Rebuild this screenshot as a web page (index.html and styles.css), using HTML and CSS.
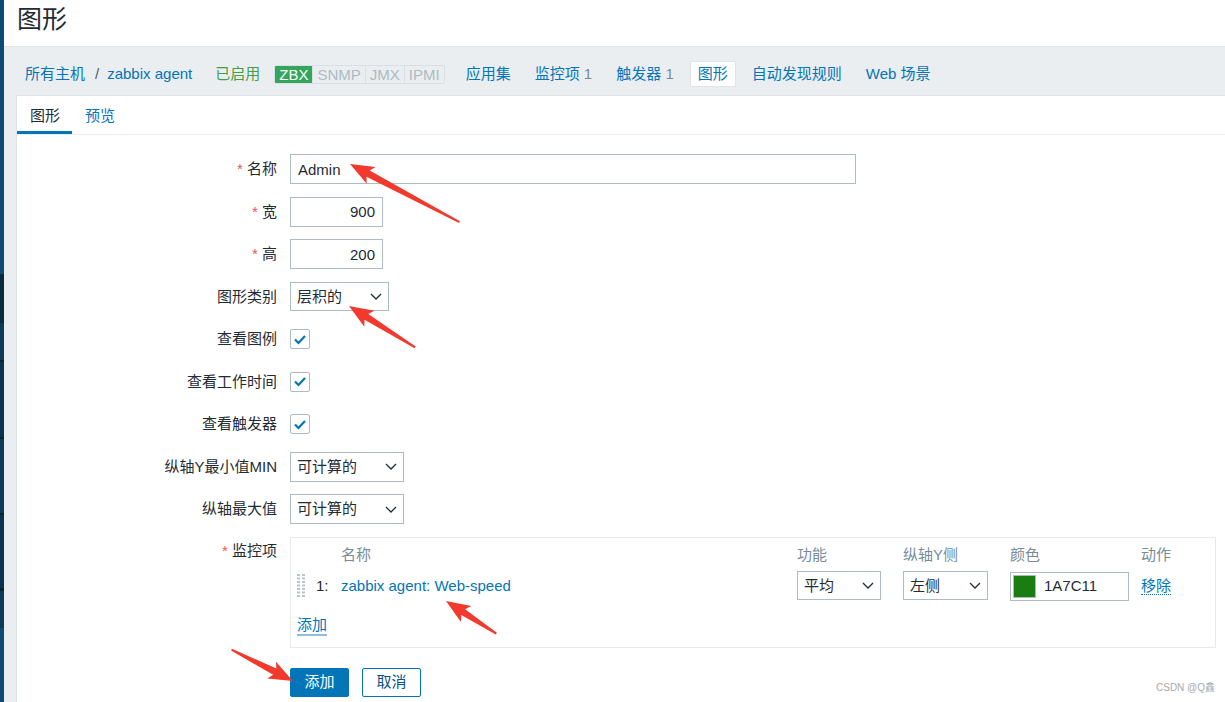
FILE: index.html
```html
<!DOCTYPE html>
<html lang="zh">
<head>
<meta charset="utf-8">
<title>图形</title>
<link rel="stylesheet" href="styles.css">
</head>
<body>
<div class="sidebar"></div>
<div class="main">
  <header class="header"><h1 class="title">图形</h1></header>
  <div class="body-area">
    <nav class="nav">
      <a class="link">所有主机</a>
      <span class="sep">/</span>
      <a class="link">zabbix agent</a>
      <span class="enabled">已启用</span>
      <span class="tags"><span class="tag on">ZBX</span><span class="tag">SNMP</span><span class="tag">JMX</span><span class="tag">IPMI</span></span>
      <ul class="nav-items">
        <li class="nav-item"><a class="link">应用集</a></li>
        <li class="nav-item"><a class="link">监控项</a> <span class="count">1</span></li>
        <li class="nav-item"><a class="link">触发器</a> <span class="count">1</span></li>
        <li class="nav-item selected"><a class="link">图形</a></li>
        <li class="nav-item"><a class="link">自动发现规则</a></li>
        <li class="nav-item"><a class="link">Web 场景</a></li>
      </ul>
    </nav>
    <section class="panel">
      <div class="tabs">
        <div class="tab active">图形</div>
        <div class="tab"><a class="link">预览</a></div>
      </div>
      <form class="form">
        <div class="row">
          <label class="lbl"><span class="req">*</span> 名称</label>
          <div class="field"><input class="text w-name" value="Admin" readonly></div>
        </div>
        <div class="row">
          <label class="lbl"><span class="req">*</span> 宽</label>
          <div class="field"><input class="text num w-num" value="900" readonly></div>
        </div>
        <div class="row">
          <label class="lbl"><span class="req">*</span> 高</label>
          <div class="field"><input class="text num w-num" value="200" readonly></div>
        </div>
        <div class="row">
          <label class="lbl">图形类别</label>
          <div class="field"><div class="select w-type"><span>层积的</span><svg class="chev" width="12" height="7" viewBox="0 0 12 7"><path d="M1 1l5 5 5-5" fill="none" stroke="#1f2c33" stroke-width="1.3"/></svg></div></div>
        </div>
        <div class="row">
          <label class="lbl">查看图例</label>
          <div class="field"><div class="cb"><svg width="14" height="11" viewBox="0 0 14 11"><path d="M2 5.5l3.5 3.5L12 2" fill="none" stroke="#0275b8" stroke-width="2.2"/></svg></div></div>
        </div>
        <div class="row">
          <label class="lbl">查看工作时间</label>
          <div class="field"><div class="cb"><svg width="14" height="11" viewBox="0 0 14 11"><path d="M2 5.5l3.5 3.5L12 2" fill="none" stroke="#0275b8" stroke-width="2.2"/></svg></div></div>
        </div>
        <div class="row">
          <label class="lbl">查看触发器</label>
          <div class="field"><div class="cb"><svg width="14" height="11" viewBox="0 0 14 11"><path d="M2 5.5l3.5 3.5L12 2" fill="none" stroke="#0275b8" stroke-width="2.2"/></svg></div></div>
        </div>
        <div class="row">
          <label class="lbl">纵轴Y最小值MIN</label>
          <div class="field"><div class="select w-calc"><span>可计算的</span><svg class="chev" width="12" height="7" viewBox="0 0 12 7"><path d="M1 1l5 5 5-5" fill="none" stroke="#1f2c33" stroke-width="1.3"/></svg></div></div>
        </div>
        <div class="row">
          <label class="lbl">纵轴最大值</label>
          <div class="field"><div class="select w-calc"><span>可计算的</span><svg class="chev" width="12" height="7" viewBox="0 0 12 7"><path d="M1 1l5 5 5-5" fill="none" stroke="#1f2c33" stroke-width="1.3"/></svg></div></div>
        </div>
        <div class="row top">
          <label class="lbl lbl-top"><span class="req">*</span> 监控项</label>
          <div class="field">
            <div class="items">
              <div class="items-grid head">
                <span></span><span></span>
                <span>名称</span><span>功能</span><span>纵轴Y侧</span><span>颜色</span><span>动作</span>
              </div>
              <div class="items-grid item-row">
                <span class="drag"><svg width="8" height="23" viewBox="0 0 8 23"><g fill="#b9c4cb"><rect x="0" y="0" width="3" height="2"/><rect x="5" y="0" width="3" height="2"/><rect x="0" y="3.5" width="3" height="2"/><rect x="5" y="3.5" width="3" height="2"/><rect x="0" y="7" width="3" height="2"/><rect x="5" y="7" width="3" height="2"/><rect x="0" y="10.5" width="3" height="2"/><rect x="5" y="10.5" width="3" height="2"/><rect x="0" y="14" width="3" height="2"/><rect x="5" y="14" width="3" height="2"/><rect x="0" y="17.5" width="3" height="2"/><rect x="5" y="17.5" width="3" height="2"/><rect x="0" y="21" width="3" height="2"/><rect x="5" y="21" width="3" height="2"/></g></svg></span>
                <span class="idx">1:</span>
                <span><a class="link">zabbix agent: Web-speed</a></span>
                <span><div class="select w-func"><span>平均</span><svg class="chev" width="12" height="7" viewBox="0 0 12 7"><path d="M1 1l5 5 5-5" fill="none" stroke="#1f2c33" stroke-width="1.3"/></svg></div></span>
                <span><div class="select w-axis"><span>左侧</span><svg class="chev" width="12" height="7" viewBox="0 0 12 7"><path d="M1 1l5 5 5-5" fill="none" stroke="#1f2c33" stroke-width="1.3"/></svg></div></span>
                <span><div class="color-input"><span class="swatch"></span><span>1A7C11</span></div></span>
                <span><a class="link action">移除</a></span>
              </div>
              <div class="add-row"><a class="link add">添加</a></div>
            </div>
          </div>
        </div>
        <div class="row buttons">
          <span></span>
          <div class="field btns">
            <button type="button" class="btn primary">添加</button>
            <button type="button" class="btn alt">取消</button>
          </div>
        </div>
      </form>
    </section>
  </div>
</div>
<div class="watermark">CSDN @Q鑫</div>
<svg class="arrows" width="1225" height="702" viewBox="0 0 1225 702">
  <g fill="#f2392e">
    <polygon transform="translate(350,164) rotate(28)" points="0,0 24,-9.5 20.5,-3.5 124,-1 124,1 20.5,3.5 24,9.5"/>
    <polygon transform="translate(349,306) rotate(32)" points="0,0 24,-9.5 20.5,-3.5 78,-1 78,1 20.5,3.5 24,9.5"/>
    <polygon transform="translate(446,601) rotate(33)" points="0,0 24,-9.5 20.5,-3.5 60,-1 60,1 20.5,3.5 24,9.5"/>
    <polygon transform="translate(293,681) rotate(207)" points="0,0 24,-9.5 20.5,-3.5 69,-1 69,1 20.5,3.5 24,9.5"/>
  </g>
</svg>
</body>
</html>
```
FILE: styles.css
```css
* { box-sizing: border-box; }
html, body { margin: 0; padding: 0; }
body {
  width: 1225px;
  height: 702px;
  overflow: hidden;
  position: relative;
  display: flex;
  font-family: "Liberation Sans", "Noto Sans CJK SC", sans-serif;
  font-size: 15px;
  line-height: 18px;
  color: #1f2c33;
  background: #ebeef0;
}
.sidebar {
  width: 4px;
  flex: none;
  background: linear-gradient(to bottom,
    #0d4b74 0, #0d4b74 274px,
    #0a2a3e 274px, #0a2a3e 323px,
    #0c3a57 323px, #0c3a57 360px,
    #07202f 360px, #07202f 362px,
    #0b3350 362px, #0b3350 437px,
    #07202f 437px, #07202f 439px,
    #0c3a57 439px, #0c3a57 513px,
    #07202f 513px, #07202f 515px,
    #0b3350 515px, #0b3350 588px,
    #07202f 588px, #07202f 591px,
    #0c3a57 591px, #0c3a57 628px,
    #0d4b74 628px);
}
.main { flex: 1; display: flex; flex-direction: column; min-width: 0; }
.header {
  height: 47px;
  background: #fff;
  border-bottom: 1px solid #dfe4e7;
  padding: 1px 0 0 13px;
}
.title {
  margin: 0;
  font-size: 25px;
  line-height: 36px;
  font-weight: normal;
  color: #1f2c33;
}
.body-area { flex: 1; padding-left: 12px; display: flex; flex-direction: column; }
.link { color: #0275b8; text-decoration: none; }
.nav {
  height: 48px;
  display: flex;
  align-items: center;
  padding: 6px 0 0 9px;
  white-space: nowrap;
}
.sep { margin: 0 8px 0 10px; color: #4f5f69; }
.enabled { color: #429e47; margin-left: 23px; }
.tags {
  display: flex;
  margin-left: 14px;
  border: 1px solid #d9dfe3;
  border-radius: 2px;
  overflow: hidden;
}
.tag {
  padding: 0 4px;
  line-height: 17px;
  height: 17px;
  color: #acbbc4;
  background: #ebeef0;
  border-left: 1px solid #d9dfe3;
}
.tag:first-child { border-left: none; }
.tag.on { background: #34a55c; color: #fff; }
.nav-items { display: flex; align-items: center; list-style: none; margin: 0 0 0 13px; padding: 0; gap: 8px; }
.nav-item { padding: 0 8px; line-height: 18px; }
.nav-item.selected {
  background: #fff;
  border: 1px solid #dfe4e7;
  border-radius: 2px;
  padding: 3px 7px;
}
.count { color: #768d99; }
.panel {
  flex: 1;
  background: #fff;
  border-top: 1px solid #dfe4e7;
  border-left: 1px solid #dfe4e7;
}
.tabs {
  display: flex;
  height: 39px;
  border-bottom: 1px solid #ebeef0;
}
.tab { padding: 1px 12px 0 13px; line-height: 37px; }
.tab.active { box-shadow: inset 0 -3px 0 #0275b8; color: #1f2c33; }
.form {
  padding-top: 19px;
  display: flex;
  flex-direction: column;
  gap: 12.5px;
}
.row {
  display: grid;
  grid-template-columns: 260px 1fr;
  column-gap: 13px;
  align-items: center;
  min-height: 30px;
}
.row.top { align-items: start; }
.lbl { text-align: right; white-space: nowrap; }
.lbl-top { padding-top: 5.5px; }
.req { color: #e45959; }
.field { display: flex; align-items: center; }
.text {
  height: 30px;
  border: 1px solid #acbbc4;
  padding: 0 7px;
  font: inherit;
  color: #1f2c33;
  background: #fff;
  outline: none;
}
.text.num { text-align: right; }
.w-name { width: 566px; }
.w-num { width: 93px; }
.select {
  height: 30px;
  border: 1px solid #acbbc4;
  background: #fff;
  display: flex;
  align-items: center;
  justify-content: space-between;
  padding: 0 6px 0 6px;
}
.chev { flex: none; }
.w-type { width: 99px; height: 29px; }
.w-calc { width: 114px; }
.w-func { width: 84px; height: 29px; }
.w-axis { width: 85px; height: 29px; }
.cb {
  width: 20px;
  height: 20px;
  border: 1px solid #acbbc4;
  border-radius: 2px;
  display: flex;
  align-items: center;
  justify-content: center;
}
.items {
  width: 926px;
  border: 1px solid #e6eaed;
  padding: 8px 6px 11px 6px;
}
.items-grid {
  display: grid;
  grid-template-columns: 19px 25px 456px 106px 107px 131px 1fr;
  align-items: center;
}
.head { color: #768d99; line-height: 18px; }
.item-row { margin-top: 7px; height: 30px; }
.drag { display: flex; align-items: center; }
.idx { color: #1f2c33; }
.color-input {
  width: 119px;
  height: 29px;
  margin-top: 1px;
  border: 1px solid #acbbc4;
  display: flex;
  align-items: center;
  padding-left: 2px;
  gap: 8px;
}
.swatch {
  width: 23px;
  height: 23px;
  background: #1a7c11;
  border: 1px solid #acbbc4;
}
.action { border-bottom: 1px dotted #0275b8; }
.add-row { margin-top: 15px; display: flex; }
.add { border-bottom: 2px solid #90bfdc; line-height: 18px; }
.buttons { margin-top: 7px; }
.btns { gap: 13px; }
.btn {
  width: 59px;
  height: 29px;
  font: inherit;
  border-radius: 2px;
  padding: 0;
}
.btn.primary { background: #0275b8; border: 1px solid #0275b8; color: #fff; }
.btn.alt { background: #fff; border: 1px solid #0275b8; color: #0b5284; }
.watermark {
  position: absolute;
  left: 1156px;
  top: 682px;
  font-size: 10px;
  line-height: 12px;
  color: #a9a9a9;
}
.arrows { position: absolute; left: 0; top: 0; pointer-events: none; }
```
